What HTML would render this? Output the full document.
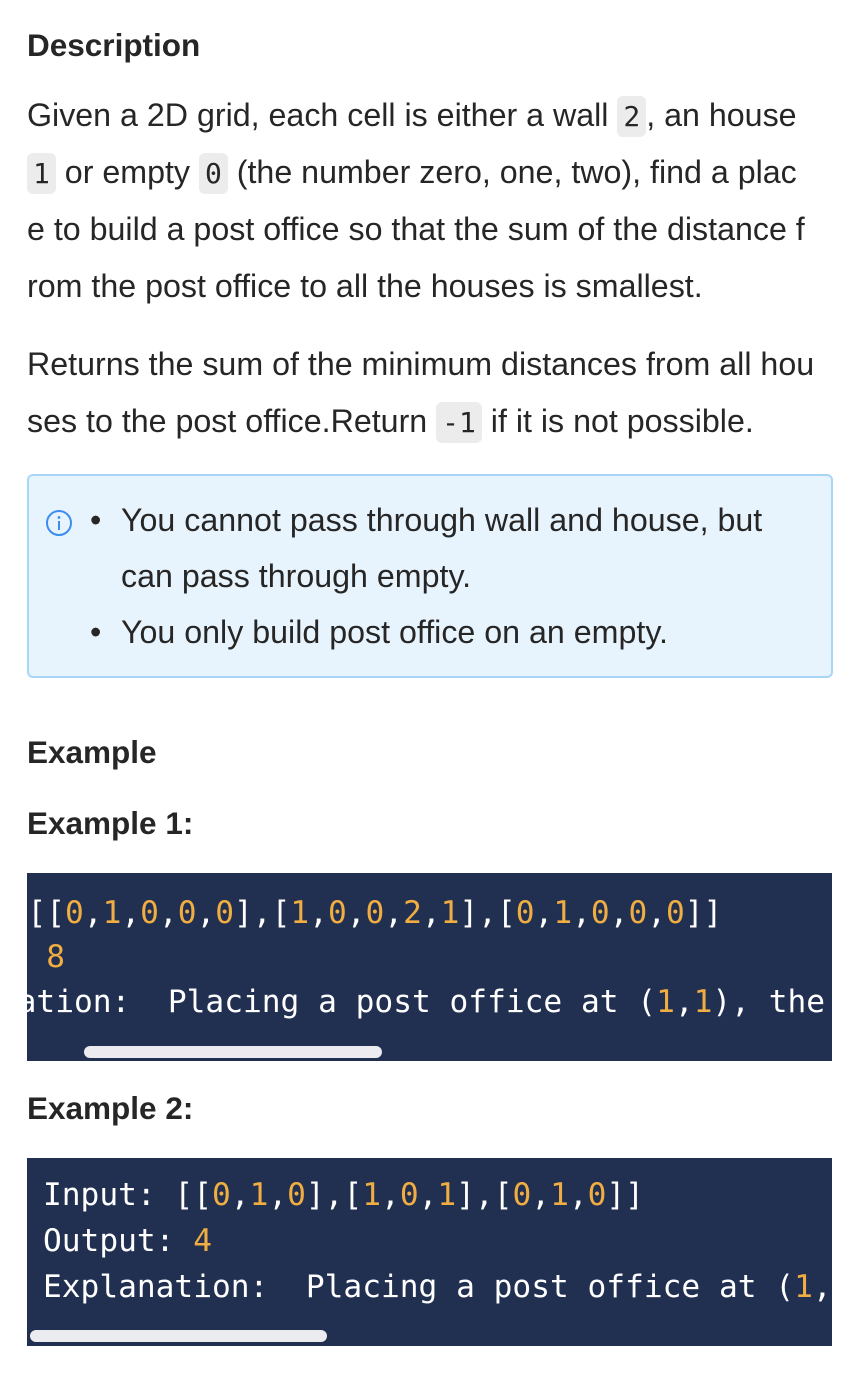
<!DOCTYPE html>
<html><head><style>
body{margin:0;width:866px;height:1394px;background:#fff;position:relative;font-family:"Liberation Sans",sans-serif;color:#262626;overflow:hidden}
.t{position:absolute;left:27px;font-size:32.2px;white-space:nowrap;line-height:40px}
.h{font-weight:bold;font-size:31.5px}
code{font-family:"DejaVu Sans Mono",monospace;font-size:28px;background:#ececec;border-radius:6px;padding:4px 6px}
.box{position:absolute;left:27px;top:474px;width:802px;height:200px;background:#e8f4fd;border:2px solid #a7d6f7;border-radius:6px}
.blk{position:absolute;left:27px;width:805px;height:188px;background:#212f50;overflow:hidden}
.cl{position:absolute;font-family:"DejaVu Sans Mono",monospace;font-size:31.2px;color:#fff;white-space:pre;line-height:40px}
.o{color:#f0ad42}
.sb{position:absolute;height:12px;background:#ebebf0;border-radius:6px}
</style></head><body>
<div class="t h" style="top:25px">Description</div>
<div class="t" style="top:95px">Given a 2D grid, each cell is either a wall <code>2</code>, an house</div>
<div class="t" style="top:152px"><code>1</code> or empty <code>0</code> (the number zero, one, two), find a plac</div>
<div class="t" style="top:209px">e to build a post office so that the sum of the distance f</div>
<div class="t" style="top:266px">rom the post office to all the houses is smallest.</div>
<div class="t" style="top:344px">Returns the sum of the minimum distances from all hou</div>
<div class="t" style="top:401px">ses to the post office.Return <code>-1</code> if it is not possible.</div>
<div class="box">
<svg style="position:absolute;left:16px;top:33px" width="28" height="28" viewBox="0 0 28 28"><circle cx="14" cy="14" r="12" fill="none" stroke="#3b8df0" stroke-width="2"/><circle cx="14" cy="8.5" r="1.4" fill="#3b8df0"/><rect x="13" y="12" width="2" height="9" fill="#3b8df0"/></svg>
</div>
<div class="t" style="top:500px;left:90px">•</div>
<div class="t" style="top:500px;left:121px">You cannot pass through wall and house, but</div>
<div class="t" style="top:556px;left:121px">can pass through empty.</div>
<div class="t" style="top:612px;left:90px">•</div>
<div class="t" style="top:612px;left:121px">You only build post office on an empty.</div>
<div class="t h" style="top:732px">Example</div>
<div class="t h" style="top:803px">Example 1:</div>
<div class="blk" style="top:873px">
<div class="cl" style="left:-131px;top:20px">Input: [[<span class="o">0</span>,<span class="o">1</span>,<span class="o">0</span>,<span class="o">0</span>,<span class="o">0</span>],[<span class="o">1</span>,<span class="o">0</span>,<span class="o">0</span>,<span class="o">2</span>,<span class="o">1</span>],[<span class="o">0</span>,<span class="o">1</span>,<span class="o">0</span>,<span class="o">0</span>,<span class="o">0</span>]]</div>
<div class="cl" style="left:-131px;top:64px">Output: <span class="o">8</span></div>
<div class="cl" style="left:-122px;top:109px">Explanation:  Placing a post office at (<span class="o">1</span>,<span class="o">1</span>), the distance that post office to all the house sum is smallest.</div>
<div class="sb" style="left:57px;top:173px;width:298px"></div>
</div>
<div class="t h" style="top:1088px">Example 2:</div>
<div class="blk" style="top:1158px">
<div class="cl" style="left:16px;top:17px">Input: [[<span class="o">0</span>,<span class="o">1</span>,<span class="o">0</span>],[<span class="o">1</span>,<span class="o">0</span>,<span class="o">1</span>],[<span class="o">0</span>,<span class="o">1</span>,<span class="o">0</span>]]</div>
<div class="cl" style="left:16px;top:63px">Output: <span class="o">4</span></div>
<div class="cl" style="left:16px;top:109px">Explanation:  Placing a post office at (<span class="o">1</span>,<span class="o">1</span>), the distance that post office to all the house sum is smallest.</div>
<div class="sb" style="left:3px;top:172px;width:297px"></div>
</div>
</body></html>
